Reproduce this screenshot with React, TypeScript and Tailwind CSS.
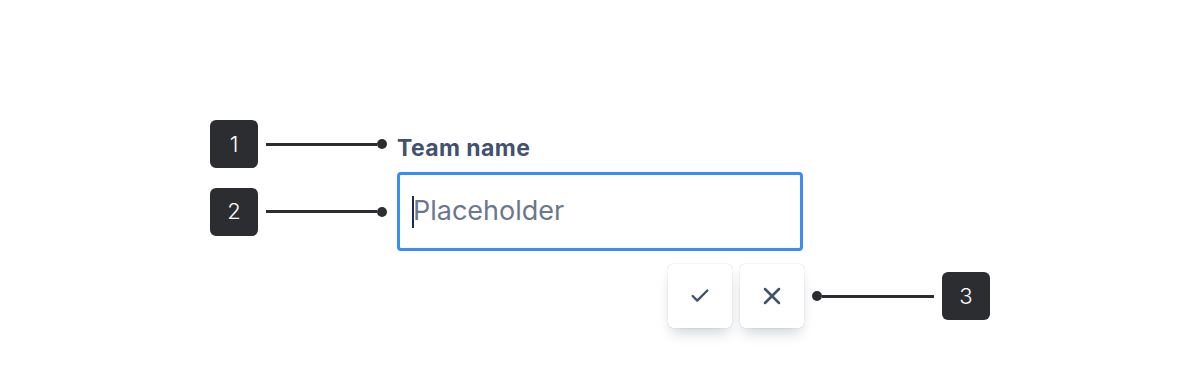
import { Check, X } from "lucide-react";

const font = { fontFamily: "Inter, 'Noto Sans', sans-serif" };

const Badge = ({ n }: { n: string }) => (
  <div className="flex h-[48px] w-[48px] shrink-0 items-center justify-center rounded-[6px] bg-[#2b2d31] text-[22px] font-light text-white">
    {n}
  </div>
);

// line with a round dot on one end
const Connector = ({ dot, width }: { dot: "left" | "right"; width: number }) => (
  <div className="flex items-center" style={{ width }}>
    {dot === "left" && <div className="h-[10px] w-[10px] shrink-0 rounded-full bg-[#2b2d31]" />}
    <div className="h-[3px] flex-1 bg-[#2b2d31]" />
    {dot === "right" && <div className="h-[10px] w-[10px] shrink-0 rounded-full bg-[#2b2d31]" />}
  </div>
);

const IconButton = ({ children }: { children: React.ReactNode }) => (
  <button className="flex h-[64px] w-[64px] items-center justify-center rounded-[5px] bg-white text-[#42526e] shadow-[0_8px_14px_-4px_rgba(9,30,66,0.22),0_0_1px_rgba(9,30,66,0.35)]">
    {children}
  </button>
);

export default function App() {
  return (
    <div className="h-[384px] w-[1200px] bg-white" style={font}>
      <div className="flex flex-col pl-[210px] pt-[120px]">
        <div className="flex h-[48px] items-center">
          <Badge n="1" />
          <div className="ml-[8px]">
            <Connector dot="right" width={121} />
          </div>
          <span className="ml-[10px] pt-[8px] text-[23px] font-bold tracking-[0.4px] text-[#42526e]">Team name</span>
        </div>

        <div className="mt-[4px] flex h-[79px] items-center">
          <Badge n="2" />
          <div className="ml-[8px]">
            <Connector dot="right" width={121} />
          </div>
          <div className="ml-[10px] flex h-[79px] w-[406px] items-center rounded-[4px] border-[3px] border-[#3b8cf6] bg-white pl-[12px]">
            <span className="h-[32px] w-[2px] bg-[#172b4d]" />
            <span className="-ml-[1px] text-[27px] text-[#6b778c]">Placeholder</span>
          </div>
        </div>

        <div className="ml-[458px] mt-[13px] flex h-[64px] items-center">
          <IconButton>
            <Check size={22} strokeWidth={2.6} />
          </IconButton>
          <div className="ml-[8px]">
            <IconButton>
              <X size={28} strokeWidth={2.2} />
            </IconButton>
          </div>
          <div className="ml-[8px]">
            <Connector dot="left" width={122} />
          </div>
          <div className="ml-[8px]">
            <Badge n="3" />
          </div>
        </div>
      </div>
    </div>
  );
}
